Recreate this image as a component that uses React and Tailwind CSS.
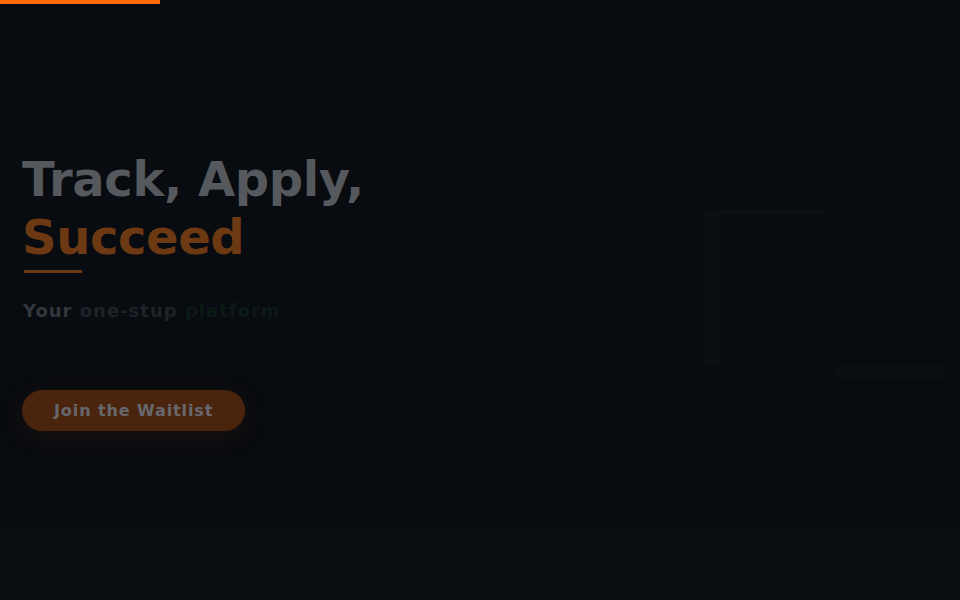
import React from 'react';

function Hero() {
  return (
    <section className="h-[528px] flex items-start justify-between pl-[22px] pt-[151px]">
      <div className="flex flex-col items-start">
        <h1 className="text-[48px] leading-[1.2] font-bold text-[#55585d] tracking-[-0.4px]">
          Track, Apply,
          <br />
          <span className="text-[#6c3913]">Succeed</span>
        </h1>
        <div className="mt-[4px] ml-[2px] w-[58px] h-[3px] bg-[#6a3812]" />
        <p className="mt-[24px] ml-[1px] text-[18px] leading-[28px] font-bold tracking-[1px]">
          <span className="text-[#33363b]">Your </span>
          <span className="text-[#1f2328]">one-stup </span>
          <span className="text-[#0c1a14]">platform</span>
        </p>
        <button className="mt-[65px] h-[41px] px-[32px] rounded-full bg-[#4a240d] text-[16px] font-bold tracking-[0.9px] text-[#67686d] shadow-[0_6px_24px_rgba(74,36,13,0.3)]">
          Join the Waitlist
        </button>
      </div>

      <div className="mt-[60px] mr-[15px] flex flex-col items-start">
        <div className="w-[125px] h-[153px] border-l-[14px] border-t-[4px] border-b-[2px] border-[#0b0f13]" />
        <div className="ml-[130px] mt-[1px] w-[110px] h-[15px] bg-[#0a0e12]" />
      </div>
    </section>
  );
}

export default function App() {
  return (
    <div
      className="relative w-full h-[600px] overflow-hidden bg-[#080b10]"
      style={{ fontFamily: '"DejaVu Sans", "Liberation Sans", sans-serif' }}
    >
      <div className="absolute top-0 left-0 w-[160px] h-[4px] bg-[#ff6a0a]" />
      <Hero />
      <section className="h-[72px] bg-[#0a0e12]" />
    </div>
  );
}
